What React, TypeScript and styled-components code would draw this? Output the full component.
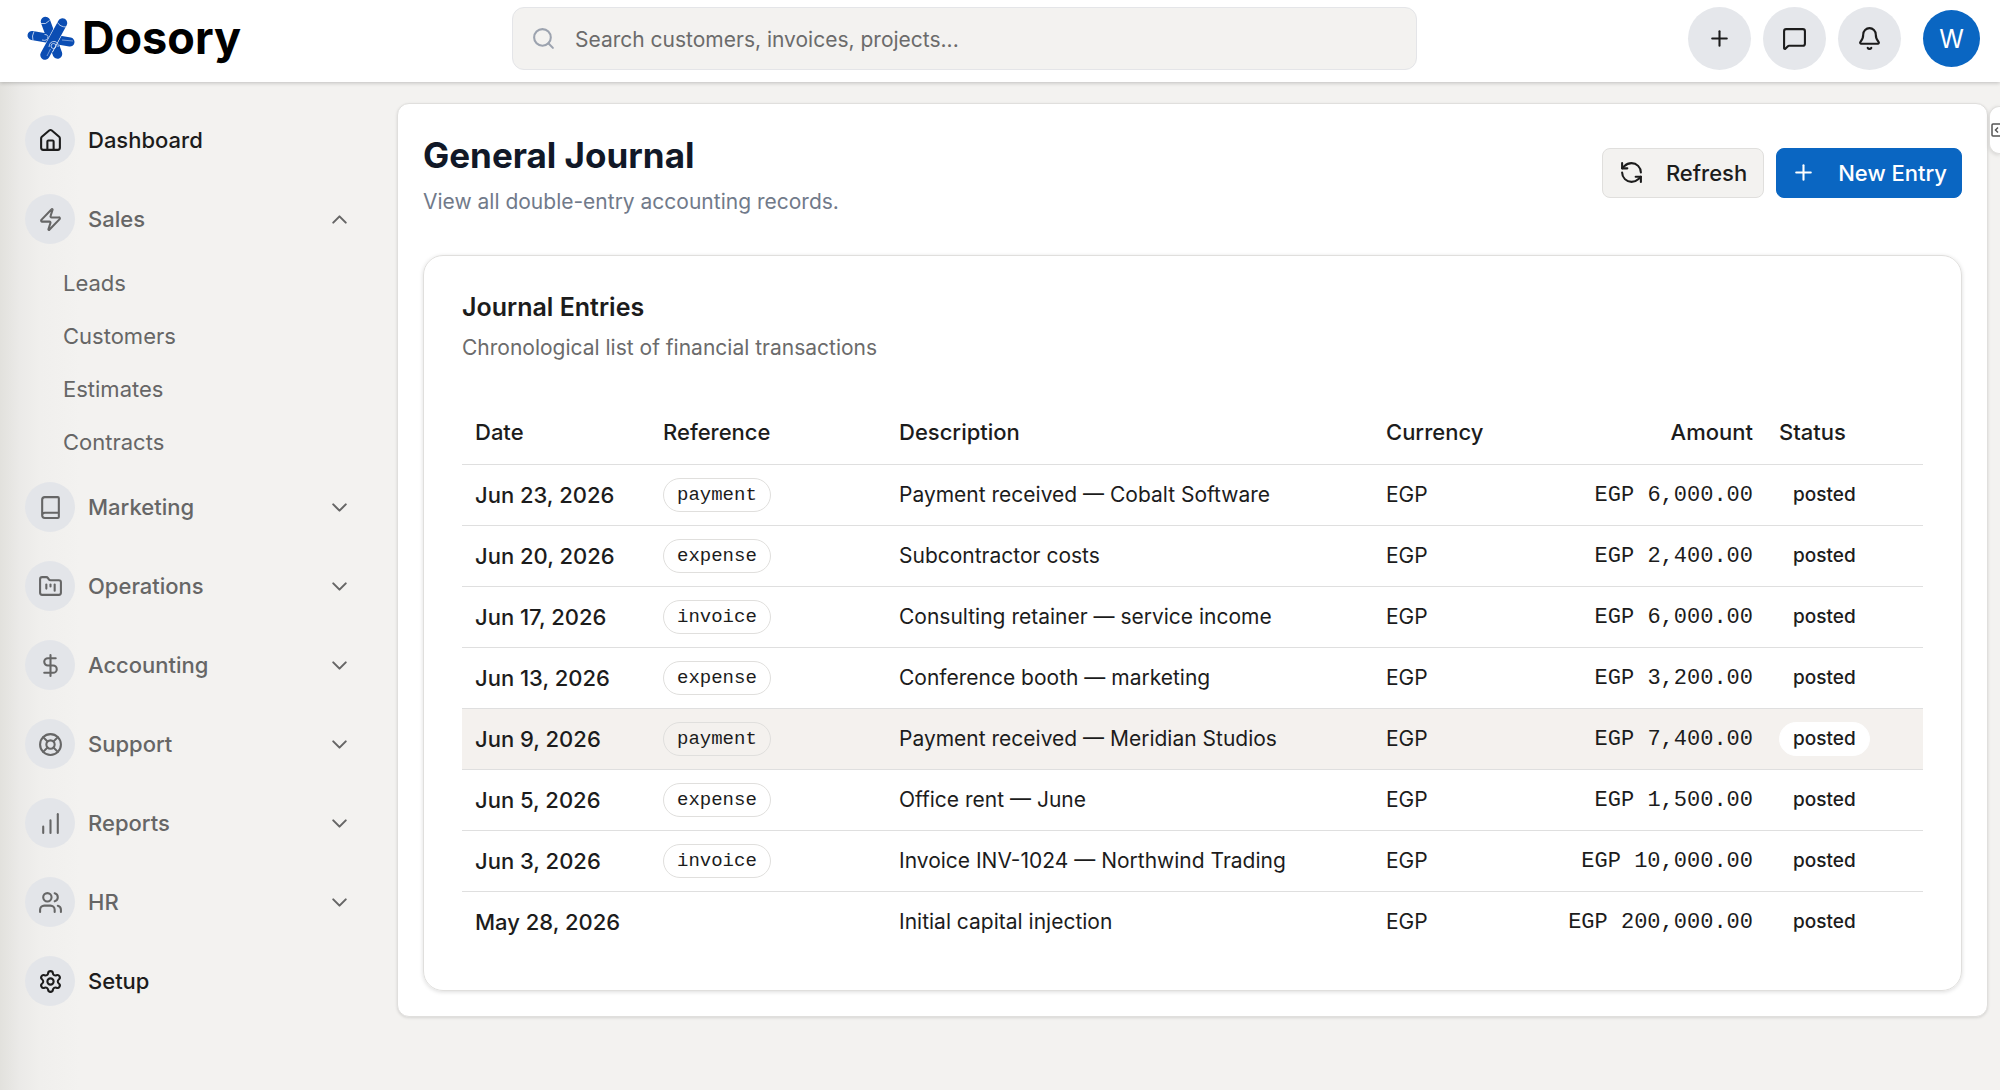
import { useState } from 'react';
import styled, { createGlobalStyle, css } from 'styled-components';
import {
  Bell,
  Book,
  ChartNoAxesColumnIncreasing,
  ChevronDown,
  ChevronUp,
  DollarSign,
  FolderKanban,
  House,
  LifeBuoy,
  LucideIcon,
  MessageSquare,
  Plus,
  RefreshCcw,
  Search,
  Settings,
  Users,
  Zap,
} from 'lucide-react';

const GlobalStyle = createGlobalStyle`
  * {
    box-sizing: border-box;
  }
  body {
    margin: 0;
    background-color: #f3f2f0;
    color: #1c1c1c;
    font-family: Inter, 'Liberation Sans', sans-serif;
    font-size: 21px;
    line-height: 30px;
  }
  button, input {
    font: inherit;
    color: inherit;
  }
  h1, h2, p, ul {
    margin: 0;
    padding: 0;
  }
`;

const Page = styled.div`
  display: flex;
  flex-direction: column;
  min-height: 100vh;
  overflow-x: hidden;
`;

const Header = styled.header`
  display: flex;
  align-items: center;
  justify-content: space-between;
  height: 82px;
  padding: 0 20px 5px 26px;
  background-color: white;
  box-shadow: 0 1px 4px rgba(0, 0, 0, 0.22);
  z-index: 1;
`;

const Brand = styled.a`
  display: flex;
  align-items: center;
  gap: 6px;
  width: 486px;
  padding-bottom: 2px;
  color: black;
  font-size: 45px;
  font-weight: 700;
  line-height: 56px;
  text-decoration: none;
`;

const SearchBox = styled.label`
  display: flex;
  align-items: center;
  gap: 19px;
  flex: 0 1 905px;
  height: 63px;
  padding: 0 18px;
  border: 1px solid #e4e5e8;
  border-radius: 12px;
  background-color: #f3f2f0;
  color: #9ca3af;
`;

const SearchInput = styled.input`
  flex: 1;
  padding: 2px 0 0;
  border: 0;
  outline: 0;
  background: none;
  color: #1c1c1c;
  &::placeholder {
    color: #6b6b6b;
    opacity: 1;
  }
`;

const HeaderActions = styled.div`
  display: flex;
  align-items: center;
  justify-content: flex-end;
  gap: 12px;
  flex: 1;
`;

const RoundButton = styled.button`
  display: grid;
  place-items: center;
  width: 63px;
  height: 63px;
  padding: 0;
  border: 0;
  border-radius: 50%;
  background-color: #e5e7eb;
`;

const Avatar = styled(RoundButton)`
  width: 57px;
  height: 57px;
  margin-left: 10px;
  background-color: #0a66c2;
  color: white;
  font-size: 25px;
`;

const Body = styled.div`
  display: flex;
  flex: 1;
  align-items: stretch;
`;

const Sidebar = styled.nav`
  flex: 0 0 397px;
  padding: 33px 45px 24px 25px;
  background-image: linear-gradient(
    to right,
    #e2e1dd 0,
    #ebeae8 20px,
    #f0efed 40px,
    #f3f2f0 80px
  );
`;

const navItem = css<{ $strong?: boolean; $open?: boolean }>`
  display: flex;
  align-items: center;
  gap: 13px;
  width: 100%;
  height: 50px;
  margin-bottom: ${({ $open }) => ($open ? '12px' : '29px')};
  padding: 0;
  border: 0;
  background: none;
  color: ${({ $strong }) => ($strong ? '#1c1c1c' : '#666666')};
  font-size: 22px;
  font-weight: 500;
  text-align: left;
  text-decoration: none;
`;

const NavLink = styled.a`
  ${navItem}
`;

const NavToggle = styled.button`
  ${navItem}
`;

const NavIcon = styled.span`
  display: grid;
  place-items: center;
  width: 50px;
  height: 50px;
  border-radius: 50%;
  background-color: #e3e5e9;
`;

const NavLabel = styled.span`
  flex: 1;
`;

const SubList = styled.ul`
  margin-bottom: 14px;
  padding-left: 38px;
  list-style: none;
`;

const SubLink = styled.a`
  display: flex;
  align-items: center;
  height: 53px;
  color: #666666;
  font-size: 22px;
  text-decoration: none;
`;

const Main = styled.main`
  flex: 1;
  min-width: 0;
  align-self: flex-start;
  margin: 21px 12px 0 0;
  padding: 29px 25px 25px;
  border: 1px solid #e0dfdd;
  border-radius: 12px;
  background-color: white;
  box-shadow: 0 1px 3px rgba(0, 0, 0, 0.12);
`;

const PageHead = styled.div`
  display: flex;
  align-items: center;
  justify-content: space-between;
  margin-bottom: 38px;
`;

const Title = styled.h1`
  color: #111827;
  font-size: 35px;
  font-weight: 700;
  line-height: 44px;
`;

const Subtitle = styled.p`
  margin-top: 10px;
  color: #717a8a;
`;

const Buttons = styled.div`
  display: flex;
  gap: 12px;
  margin-bottom: 5px;
`;

const Button = styled.button<{ $primary?: boolean }>`
  display: flex;
  align-items: center;
  gap: 22px;
  height: 50px;
  padding: ${({ $primary }) => ($primary ? '0 14px' : '0 16px')};
  border: 1px solid ${({ $primary }) => ($primary ? '#0a66c2' : '#e0dfdd')};
  border-radius: 8px;
  background-color: ${({ $primary }) => ($primary ? '#0a66c2' : '#f3f2f0')};
  color: ${({ $primary }) => ($primary ? 'white' : '#1c1c1c')};
  font-size: 22px;
  font-weight: 500;
`;

const Card = styled.section`
  padding: 35px 38px 38px;
  border: 1px solid #e0dfdd;
  border-radius: 20px;
  box-shadow: 0 1px 4px rgba(0, 0, 0, 0.14);
`;

const CardTitle = styled.h2`
  font-size: 25px;
  font-weight: 600;
  line-height: 32px;
`;

const CardText = styled.p`
  margin: 10px 0 37px;
  color: #6b6b6b;
`;

const Table = styled.table`
  width: 100%;
  border-collapse: collapse;
  table-layout: fixed;
`;

const Th = styled.th<{ $width?: number; $right?: boolean }>`
  width: ${({ $width }) => ($width ? `${$width}px` : 'auto')};
  height: 64px;
  padding: 0 13px;
  font-size: 22px;
  font-weight: 500;
  text-align: ${({ $right }) => ($right ? 'right' : 'left')};
`;

const Tr = styled.tr<{ $active?: boolean }>`
  border-bottom: 1px solid #dfdfdf;
  background-color: ${({ $active }) => ($active ? '#f4f1ee' : 'transparent')};
  tbody &:last-child {
    border-bottom: 0;
  }
`;

const Td = styled.td`
  height: 61px;
  padding: 0 13px;
  white-space: nowrap;
`;

const DateCell = styled(Td)`
  font-size: 22px;
  font-weight: 500;
`;

const AmountCell = styled(Td)`
  padding-top: 2px;
  font-family: 'Liberation Mono', monospace;
  font-size: 22px;
  text-align: right;
`;

const Badge = styled.span`
  display: inline-flex;
  align-items: center;
  height: 34px;
  padding: 0 13px;
  border: 1px solid #e0dfdd;
  border-radius: 17px;
  font-family: 'Liberation Mono', monospace;
  font-size: 19px;
  vertical-align: middle;
`;

const StatusBadge = styled(Badge)`
  border-color: white;
  background-color: white;
  font-family: inherit;
  font-weight: 500;
`;

// handle of the collapsed panel, sits over the right edge of the window
const PanelHandle = styled.button`
  position: absolute;
  top: 106px;
  right: 0;
  display: flex;
  align-items: center;
  width: 11px;
  height: 48px;
  padding: 0;
  border: 1px solid #e0dfdd;
  border-right: 0;
  border-radius: 10px 0 0 10px;
  background-color: white;
  box-shadow: 0 1px 4px rgba(0, 0, 0, 0.14);
  color: #555555;
  overflow: hidden;
  svg {
    flex-shrink: 0;
  }
`;

interface NavEntry {
  label: string;
  icon: LucideIcon;
  link?: boolean;
  children?: string[];
}

const navEntries: NavEntry[] = [
  { label: 'Dashboard', icon: House, link: true },
  {
    label: 'Sales',
    icon: Zap,
    children: ['Leads', 'Customers', 'Estimates', 'Contracts'],
  },
  { label: 'Marketing', icon: Book },
  { label: 'Operations', icon: FolderKanban },
  { label: 'Accounting', icon: DollarSign },
  { label: 'Support', icon: LifeBuoy },
  { label: 'Reports', icon: ChartNoAxesColumnIncreasing },
  { label: 'HR', icon: Users },
  { label: 'Setup', icon: Settings, link: true },
];

const entries = [
  ['Jun 23, 2026', 'payment', 'Payment received — Cobalt Software', '6,000.00'],
  ['Jun 20, 2026', 'expense', 'Subcontractor costs', '2,400.00'],
  ['Jun 17, 2026', 'invoice', 'Consulting retainer — service income', '6,000.00'],
  ['Jun 13, 2026', 'expense', 'Conference booth — marketing', '3,200.00'],
  ['Jun 9, 2026', 'payment', 'Payment received — Meridian Studios', '7,400.00'],
  ['Jun 5, 2026', 'expense', 'Office rent — June', '1,500.00'],
  ['Jun 3, 2026', 'invoice', 'Invoice INV-1024 — Northwind Trading', '10,000.00'],
  ['May 28, 2026', '', 'Initial capital injection', '200,000.00'],
];

const ICON = 25;

function Logo() {
  return (
    <svg width='50' height='48' viewBox='6 5 50 48' fill='none' aria-hidden='true'>
      {/* left to right log */}
      <path d='M12 26.5 L50 33' stroke='#0b4db3' strokeWidth='9' strokeLinecap='round' />
      <path d='M14 22.5 Q11.5 27 13 31.5' stroke='#dfe9f8' strokeWidth='0.8' />
      <path d='M42 31 L53 32' stroke='#dfe9f8' strokeWidth='0.5' />
      {/* steep log */}
      <path d='M25.5 12.5 L37.5 45' stroke='#0b4db3' strokeWidth='9.5' strokeLinecap='round' />
      <path d='M20.5 14.5 Q26 16 29.5 11.5' stroke='#dfe9f8' strokeWidth='0.8' />
      <path d='M22 31 Q28 32.5 28 27.5 Q27 25 24.5 25.5' stroke='#dfe9f8' strokeWidth='0.8' />
      {/* front log */}
      <path d='M40.5 17.5 L28 41' stroke='white' strokeWidth='10.6' />
      <path d='M42.5 14 L25 46' stroke='#0b4db3' strokeWidth='9.5' strokeLinecap='round' />
      <path d='M37.5 13.5 Q40 18 46.5 18' stroke='#dfe9f8' strokeWidth='0.8' />
      <circle cx='33.5' cy='37' r='2.5' stroke='#dfe9f8' strokeWidth='0.8' />
      <path d='M29 38 Q29.5 32 35 32.5 Q39 34 38 38' stroke='#dfe9f8' strokeWidth='0.8' />
      <path d='M30.5 40 L27 47' stroke='#dfe9f8' strokeWidth='0.5' />
    </svg>
  );
}

function PanelIcon() {
  return (
    <svg width='16' height='16' viewBox='0 0 16 16' fill='none' stroke='currentColor'>
      <rect x='2' y='2' width='13' height='12' rx='1' strokeWidth='1.5' />
      <path d='M8 5.5 L5.5 8 L8 10.5' strokeWidth='1.5' />
    </svg>
  );
}

function NavGroup({ label, icon: Icon, link, children }: NavEntry) {
  const [open, setOpen] = useState(!!children);

  if (link) {
    return (
      <NavLink href='#' $strong>
        <NavIcon>
          <Icon size={ICON} />
        </NavIcon>
        <NavLabel>{label}</NavLabel>
      </NavLink>
    );
  }

  return (
    <>
      <NavToggle
        type='button'
        aria-expanded={open}
        $open={open && !!children}
        onClick={() => setOpen(!open)}
      >
        <NavIcon>
          <Icon size={ICON} />
        </NavIcon>
        <NavLabel>{label}</NavLabel>
        {open ? <ChevronUp size={ICON} /> : <ChevronDown size={ICON} />}
      </NavToggle>
      {open && children && (
        <SubList>
          {children.map((child) => (
            <li key={child}>
              <SubLink href='#'>{child}</SubLink>
            </li>
          ))}
        </SubList>
      )}
    </>
  );
}

function App() {
  return (
    <Page>
      <GlobalStyle />
      <Header>
        <Brand href='#'>
          <Logo />
          Dosory
        </Brand>
        <SearchBox>
          <Search size={ICON} />
          <SearchInput
            type='text'
            aria-label='Search'
            placeholder='Search customers, invoices, projects...'
          />
        </SearchBox>
        <HeaderActions>
          <RoundButton aria-label='Create'>
            <Plus size={ICON} />
          </RoundButton>
          <RoundButton aria-label='Messages'>
            <MessageSquare size={ICON} />
          </RoundButton>
          <RoundButton aria-label='Notifications'>
            <Bell size={ICON} />
          </RoundButton>
          <Avatar>W</Avatar>
        </HeaderActions>
      </Header>

      <Body>
        <Sidebar>
          {navEntries.map((entry) => (
            <NavGroup key={entry.label} {...entry} />
          ))}
        </Sidebar>

        <Main>
          <PageHead>
            <div>
              <Title>General Journal</Title>
              <Subtitle>View all double-entry accounting records.</Subtitle>
            </div>
            <Buttons>
              <Button type='button'>
                <RefreshCcw size={ICON} />
                Refresh
              </Button>
              <Button type='button' $primary>
                <Plus size={ICON} />
                New Entry
              </Button>
            </Buttons>
          </PageHead>

          <Card>
            <CardTitle>Journal Entries</CardTitle>
            <CardText>Chronological list of financial transactions</CardText>
            <Table>
              <thead>
                <Tr>
                  <Th $width={188}>Date</Th>
                  <Th $width={236}>Reference</Th>
                  <Th>Description</Th>
                  <Th $width={150}>Currency</Th>
                  <Th $width={243} $right>
                    Amount
                  </Th>
                  <Th $width={157}>Status</Th>
                </Tr>
              </thead>
              <tbody>
                {entries.map(([date, reference, description, amount]) => (
                  <Tr key={date} $active={date === 'Jun 9, 2026'}>
                    <DateCell>{date}</DateCell>
                    <Td>{reference && <Badge>{reference}</Badge>}</Td>
                    <Td>{description}</Td>
                    <Td>EGP</Td>
                    <AmountCell>EGP {amount}</AmountCell>
                    <Td>
                      <StatusBadge>posted</StatusBadge>
                    </Td>
                  </Tr>
                ))}
              </tbody>
            </Table>
          </Card>
        </Main>
      </Body>

      <PanelHandle type='button' aria-label='Open panel'>
        <PanelIcon />
      </PanelHandle>
    </Page>
  );
}

export default App;
